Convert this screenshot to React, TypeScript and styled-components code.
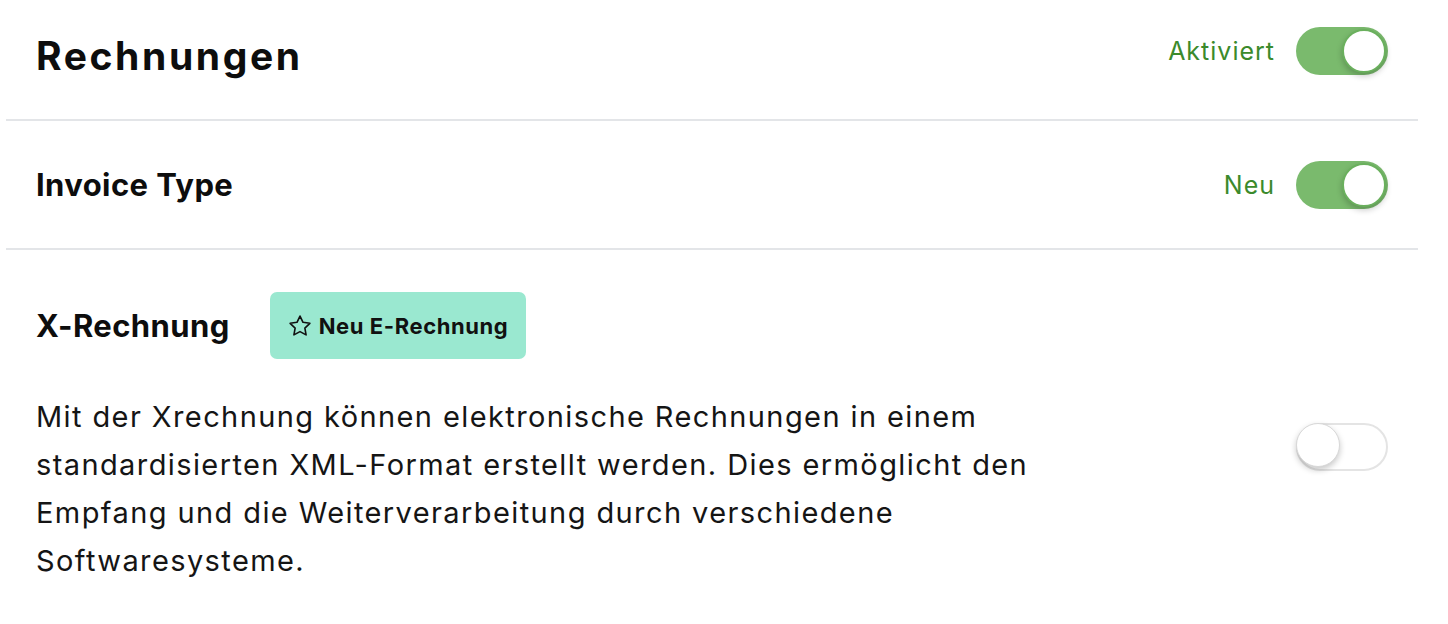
import styled, { createGlobalStyle } from "styled-components";

const GlobalStyle = createGlobalStyle`
  body {
    margin: 0;
    background: #ffffff;
    font-family: Inter, "Noto Sans", sans-serif;
    color: #111111;
  }
`;

type ToggleProps = {
  on: boolean;
};

const Toggle = ({ on }: ToggleProps) => (
  <Track $on={on}>
    <Knob $on={on} />
  </Track>
);

const StarIcon = () => (
  <svg width="26" height="26" viewBox="0 0 24 24" fill="none" stroke="#111" strokeWidth="1.5" strokeLinejoin="round">
    <path d="M12 2.8l2.8 5.8 6.3.9-4.6 4.4 1.1 6.3L12 17.2l-5.6 3 1.1-6.3-4.6-4.4 6.3-.9z" />
  </svg>
);

export default function App() {
  return (
    <>
      <GlobalStyle />
      <Page>
        <Section $height={121}>
          <HeaderRow $offset={-17}>
            <Title>Rechnungen</Title>
            <StatusGroup>
              <StatusLabel>Aktiviert</StatusLabel>
              <Toggle on />
            </StatusGroup>
          </HeaderRow>
        </Section>
        <Section $height={129}>
          <HeaderRow $offset={0}>
            <SubTitle>Invoice Type</SubTitle>
            <StatusGroup>
              <StatusLabel>Neu</StatusLabel>
              <Toggle on />
            </StatusGroup>
          </HeaderRow>
        </Section>
        <OptionSection>
          <OptionHead>
            <SubTitle>X-Rechnung</SubTitle>
            <Badge>
              <StarIcon />
              Neu E-Rechnung
            </Badge>
          </OptionHead>
          <OptionBody>
            <Description>
              Mit der Xrechnung können elektronische Rechnungen in einem standardisierten XML-Format
              erstellt werden. Dies ermöglicht den Empfang und die Weiterverarbeitung durch
              verschiedene Softwaresysteme.
            </Description>
            <ToggleSlot>
              <Toggle on={false} />
            </ToggleSlot>
          </OptionBody>
        </OptionSection>
      </Page>
    </>
  );
}

const Page = styled.div`
  padding: 0 30px 0 6px;
  width: 1448px;
  box-sizing: border-box;
`;

const Section = styled.div<{ $height: number }>`
  height: ${(p) => p.$height}px;
  border-bottom: 2px solid #e3e5e8;
  box-sizing: border-box;
  display: flex;
  align-items: center;
  padding: 0 30px 0 30px;
`;

const HeaderRow = styled.div<{ $offset: number }>`
  flex: 1;
  display: flex;
  align-items: center;
  justify-content: space-between;
  margin-top: ${(p) => p.$offset}px;
`;

const Title = styled.h1`
  margin: 8px 0 0 0;
  font-size: 39px;
  font-weight: 700;
  letter-spacing: 2.6px;
  color: #0d0d0d;
`;

const SubTitle = styled.h2`
  margin: 0;
  font-size: 31px;
  font-weight: 700;
  letter-spacing: 0.4px;
  color: #0d0d0d;
`;

const StatusGroup = styled.div`
  display: flex;
  align-items: center;
  gap: 21px;
`;

const StatusLabel = styled.span`
  font-size: 25px;
  letter-spacing: 1px;
  color: #3b8a2c;
`;

const Track = styled.div<{ $on: boolean }>`
  width: 92px;
  height: 48px;
  border-radius: 24px;
  box-sizing: border-box;
  position: relative;
  background: ${(p) => (p.$on ? "#7aba6d" : "#ffffff")};
  border: ${(p) => (p.$on ? "none" : "2px solid #e4e4e4")};
`;

const Knob = styled.div<{ $on: boolean }>`
  position: absolute;
  top: ${(p) => (p.$on ? "2px" : "-2px")};
  left: ${(p) => (p.$on ? "46px" : "-2px")};
  width: 44px;
  height: 44px;
  border-radius: 50%;
  background: #ffffff;
  box-sizing: border-box;
  border: ${(p) => (p.$on ? "2px solid #6ab05d" : "1px solid #d8d8d8")};
  box-shadow: 0 3px 6px rgba(0, 0, 0, 0.22);
`;

const OptionSection = styled.div`
  padding: 42px 30px 0 30px;
`;

const OptionHead = styled.div`
  display: flex;
  align-items: center;
  gap: 40px;
`;

const Badge = styled.div`
  display: flex;
  align-items: center;
  gap: 6px;
  height: 67px;
  padding: 0 18px 0 17px;
  border-radius: 7px;
  background: #9ae8d0;
  font-size: 22px;
  font-weight: 700;
  letter-spacing: 0.6px;
  color: #111111;
`;

const OptionBody = styled.div`
  display: flex;
  justify-content: space-between;
  align-items: flex-start;
  margin-top: 34px;
`;

const Description = styled.p`
  margin: 0;
  max-width: 1010px;
  font-size: 29px;
  line-height: 48px;
  letter-spacing: 1.4px;
  color: #151515;
`;

const ToggleSlot = styled.div`
  padding-top: 30px;
`;
